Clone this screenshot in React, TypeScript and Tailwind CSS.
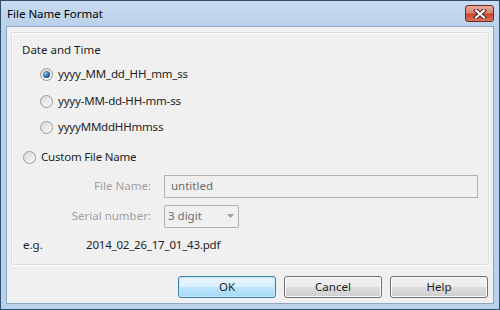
import React from "react";

const font = { fontFamily: '"Noto Sans", "Open Sans", sans-serif' };

function Radio({ checked, label, className = "" }: { checked?: boolean; label: string; className?: string }) {
  return (
    <div className={`flex h-[24px] items-center ${className}`}>
      <span className="relative flex size-[13px] items-center justify-center rounded-full border border-[#9a9a9a] bg-gradient-to-br from-[#d8d8d8] to-[#fbfbfb]">
        {checked && (
          <span className="size-[7px] rounded-full bg-[radial-gradient(circle_at_35%_35%,#8fc4ee,#1f5c93_60%,#0f3a66)]" />
        )}
      </span>
      <span className="ml-[5px] text-[11.5px] tracking-[-0.2px] text-[#1e1e1e]">{label}</span>
    </div>
  );
}

function Button({ label, primary }: { label: string; primary?: boolean }) {
  return (
    <div
      className={`flex h-[22px] w-[98px] items-center justify-center rounded-[3px] border text-[11.5px] text-[#1e1e1e] ${
        primary
          ? "border-[#3c7fb1] bg-[linear-gradient(#eaf6fd_0%,#d9f0fc_50%,#bee6fd_51%,#a7d9f5_100%)] shadow-[inset_0_0_0_1px_#c6e8fb]"
          : "border-[#707070] bg-[linear-gradient(#f2f2f2_0%,#ebebeb_50%,#dddddd_51%,#cfcfcf_100%)] shadow-[inset_0_0_0_1px_#fcfcfc]"
      }`}
    >
      {label}
    </div>
  );
}

export default function App() {
  return (
    <div style={font} className="flex h-[310px] w-[500px] flex-col border border-[#2f4f6e] bg-[linear-gradient(#c9dcef_0px,#b9d1ea_25px,#b9d1ea_100%)]">
      {/* title bar */}
      <div className="flex h-[25px] items-center justify-between pl-[6px] pr-[5px]">
        <span className="text-[11.5px] text-black">File Name Format</span>
        <div className="flex h-[17px] w-[29px] items-center justify-center rounded-[3px] border border-[#6b2a22] bg-[linear-gradient(#e9a99b_0%,#d98471_45%,#c9452f_55%,#d7755c_100%)]">
          <svg width="14" height="10" viewBox="0 0 14 10">
            <path d="M3 1.5 L11 8.5 M11 1.5 L3 8.5" stroke="#4a1a12" strokeWidth="4" strokeLinecap="square" />
            <path d="M3 1.5 L11 8.5 M11 1.5 L3 8.5" stroke="#ffffff" strokeWidth="2.2" strokeLinecap="square" />
          </svg>
        </div>
      </div>

      {/* client area */}
      <div className="mx-[5px] mb-[5px] flex flex-1 flex-col border border-[#8ca8c4] bg-[#f0f0f0] px-[4px] pt-[5px] pb-[5px]">
        <div className="flex flex-col rounded-[3px] border border-[#d5dfe5] px-[10px] pt-[5px] pb-[7px] shadow-[inset_1px_1px_0_#ffffff,1px_1px_0_#ffffff]">
          <div className="flex h-[24px] items-center text-[11.5px] text-[#1e1e1e]">Date and Time</div>
          <Radio checked label="yyyy_MM_dd_HH_mm_ss" className="ml-[18px]" />
          <Radio label="yyyy-MM-dd-HH-mm-ss" className="ml-[18px] mt-[3px]" />
          <Radio label="yyyyMMddHHmmss" className="ml-[18px] mt-[2px]" />
          <Radio label="Custom File Name" className="ml-[1px] mt-[6px]" />

          <div className="mt-[5px] flex h-[24px] items-center">
            <span className="w-[129px] text-right text-[11.5px] text-[#a0a0a0]">File Name:</span>
            <div className="ml-[13px] flex h-[23px] flex-1 items-center border border-[#adb2b5] bg-[#f0f0f0] px-[6px] text-[11.5px] text-[#6d6d6d]">
              untitled
            </div>
          </div>

          <div className="mt-[6px] flex h-[24px] items-center">
            <span className="w-[129px] text-right text-[11.5px] text-[#a0a0a0]">Serial number:</span>
            <div className="ml-[13px] flex h-[23px] w-[75px] items-center justify-between rounded-[2px] border border-[#adb2b5] bg-[#f0f0f0] pl-[3px] pr-[4px] text-[11.5px] text-[#6d6d6d]">
              <span>3 digit</span>
              <svg width="7" height="4" viewBox="0 0 7 4">
                <path d="M0 0 L7 0 L3.5 4 Z" fill="#a0a0a0" />
              </svg>
            </div>
          </div>

          <div className="mt-[5px] flex h-[24px] items-center text-[11.5px] text-[#1e1e1e]">
            <span className="w-[64px] pl-[1px]">e.g.</span>
            <span className="tracking-[-0.2px]">2014_02_26_17_01_43.pdf</span>
          </div>
        </div>

        <div className="mt-auto flex justify-end gap-[8px] pr-[1px]">
          <Button label="OK" primary />
          <Button label="Cancel" />
          <Button label="Help" />
        </div>
      </div>
    </div>
  );
}
